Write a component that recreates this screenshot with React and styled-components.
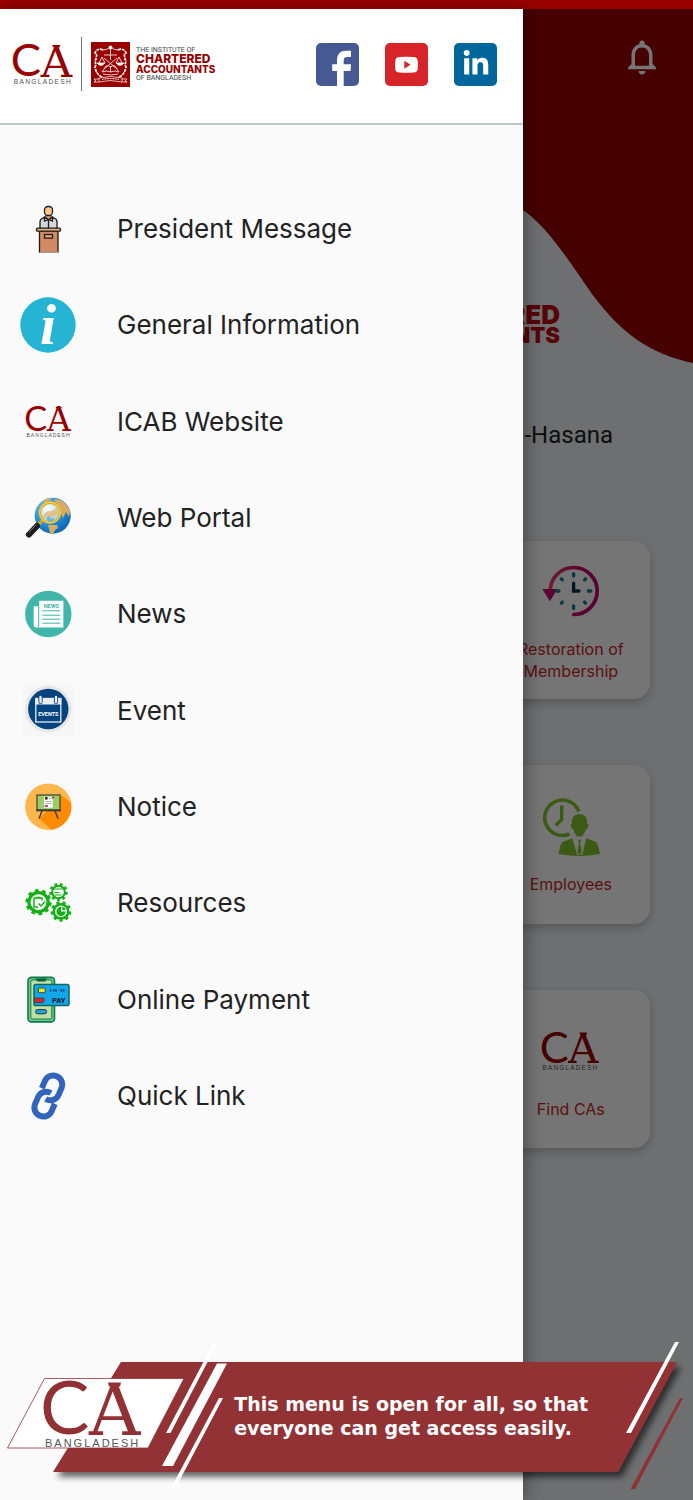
import React from "react";
import styled, { createGlobalStyle } from "styled-components";
import { MdNotificationsNone } from "react-icons/md";
import { FaLinkedinIn } from "react-icons/fa";

const BRAND = "#990000";
const BANNER = "#933034";

const GlobalStyle = createGlobalStyle`
	* { box-sizing: border-box; }
	body {
		margin: 0;
		font-family: Inter, "Liberation Sans", sans-serif;
		color: #222;
	}
	a { color: inherit; text-decoration: none; }
	svg { overflow: visible; }
`;

const Page = styled.div`
	display: flex;
	flex-direction: column;
	min-height: 100vh;
	overflow: hidden;
`;

const StatusBar = styled.div`
	height: 9px;
	background: ${BRAND};
`;

// every layer of the stage (home, scrim, drawer, banner) shares one grid cell
const Stage = styled.div`
	flex: 1;
	display: grid;
	grid-template-columns: minmax(0, 1fr);
	grid-template-rows: minmax(0, 1fr);
	> * { grid-area: 1 / 1; }
`;

const Home = styled.main`
	background: #edf1f5;
`;

const Hero = styled.header`
	display: grid;
	> * { grid-area: 1 / 1; }
`;

const Wave = styled.svg`
	display: block;
	width: 100%;
	height: 354px;
`;

const HeroContent = styled.div`
	display: flex;
	flex-direction: column;
	justify-content: space-between;
	align-items: flex-end;
	padding: 27px 30px 18px;
`;

const BellButton = styled.button`
	display: flex;
	padding: 0;
	border: 0;
	background: none;
	color: #fff;
	font-size: 42px;
`;

const HomeLogo = styled.div`
	margin-right: 103px;
	color: #c00a14;
	font-weight: 900;
	font-size: 26px;
	line-height: 20px;
	text-align: right;
`;

const HomeLogoSmall = styled.div`
	font-size: 22px;
`;

const UserName = styled.p`
	margin: 0;
	padding: 58px 80px 0 0;
	font-family: Roboto, sans-serif;
	font-size: 24px;
	line-height: 28px;
	text-align: right;
`;

const CardGrid = styled.section`
	display: grid;
	grid-template-columns: repeat(3, 1fr);
	gap: 66px;
	padding: 92px 43px;
`;

const Card = styled.a`
	grid-column: 3;
	aspect-ratio: 1;
	display: flex;
	flex-direction: column;
	align-items: center;
	justify-content: center;
	gap: 18px;
	padding-top: 4px;
	border-radius: 16px;
	background: #fff;
	box-shadow: 0 4px 10px rgba(0, 0, 0, 0.2);
	color: #c62828;
	font-size: 16px;
	line-height: 22px;
	text-align: center;
`;

const CardIcon = styled.svg`
	width: 58px;
	height: 58px;
`;

const Scrim = styled.div`
	background: rgba(0, 0, 0, 0.54);
`;

const Drawer = styled.aside`
	width: 75.5%;
	background: #fafafa;
	box-shadow: 4px 0 16px rgba(0, 0, 0, 0.3);
`;

const DrawerHeader = styled.div`
	display: flex;
	align-items: center;
	justify-content: space-between;
	height: 116px;
	padding: 0 26px 4px 13px;
	background: #fff;
	border-bottom: 2px solid #b9c8c2;
`;

const Brand = styled.div`
	display: flex;
	align-items: center;
`;

const BrandMark = styled.svg`
	width: 61px;
	height: 41px;
`;

const Divider = styled.span`
	width: 1px;
	height: 54px;
	margin: 0 9px 0 7px;
	background: #777;
`;

const BrandText = styled.div`
	margin-left: 6px;
	color: #444;
	font-family: Roboto, sans-serif;
	font-size: 7px;
	line-height: 8px;
`;

const BrandStrong = styled.div`
	color: ${BRAND};
	font-family: Inter, sans-serif;
	font-weight: 800;
	font-size: ${props => (props.$small ? "10px" : "12px")};
	line-height: 10px;
`;

const Social = styled.div`
	display: flex;
	gap: 26px;
`;

const SocialLink = styled.a`
	display: flex;
	align-items: center;
	justify-content: center;
	width: 43px;
	height: 43px;
	border-radius: 5px;
	background: ${props => props.$color};
	color: #fff;
	font-size: 28px;
`;

const Menu = styled.ul`
	display: grid;
	grid-auto-rows: 1fr;
	min-height: 963px;
	margin: 56px 0 0;
	padding: 0;
	list-style: none;
`;

const MenuLink = styled.a`
	display: flex;
	align-items: center;
	gap: 41px;
	height: 100%;
	padding-left: 20px;
	font-size: 26px;
	line-height: 32px;
`;

const MenuIcon = styled.svg`
	flex: none;
	width: 56px;
	height: 56px;
`;

const Banner = styled.div`
	align-self: end;
	display: grid;
	> * { grid-area: 1 / 1; }
`;

const BannerArt = styled.svg`
	display: block;
	width: 100%;
	height: auto;
`;

const BannerText = styled.p`
	margin: 0;
	padding: 56px 0 0 33.8%;
	color: #fff;
	font-family: "DejaVu Sans", sans-serif;
	font-weight: bold;
	font-size: 19px;
	line-height: 24px;
`;

// CA / BANGLADESH word mark, drawn on a 99 x 66 field
const CaLogo = ({ color = BRAND }) => (
	<g>
		<text x="-4" y="53" fontFamily="Lato, sans-serif" fontSize="74" fill={color}>C</text>
		<text x="45" y="54" fontFamily="'DejaVu Serif', serif" fontSize="71" fill={color}>A</text>
		<path d="M64 1.500h13l-1 4h-11z" fill={color} />
		<text x="1" y="66" fontFamily="'Liberation Sans', sans-serif" fontSize="11" letterSpacing="2" fill="#555">BANGLADESH</text>
	</g>
);

const Gear = ({ x, y, r, teeth, width }) => (
	<g fill="none" stroke="#12b012">
		<circle cx={x} cy={y} r={r} strokeWidth={width} />
		<circle
			cx={x}
			cy={y}
			r={r + width / 2 + 0.6}
			strokeWidth="2.6"
			pathLength={teeth * 2}
			strokeDasharray="1 1"
		/>
	</g>
);

const Emblem = () => (
	<svg width="39" height="45" viewBox="0 0 39 45" fill="none" stroke="#fff" role="img" aria-label="ICAB emblem">
		<rect width="39" height="45" fill={BRAND} stroke="none" />
		<path d="M12 8c-4-2-7 0-8 3 3 1 1 4 1 6-2 3 1 5-1 8 1 5 3 9 8 10M27 8c4-2 7 0 8 3-3 1-1 4-1 6 2 3-1 5 1 8-1 5-3 9-8 10" strokeWidth="1.7" strokeDasharray="3 .8" />
		<path d="M12 8q4 0 7.500-3 3.500 3 7.500 3M19.500 5v13M13 13h13M6 21h8M25 21h8M8 21l3-6 3 6M25 21l3-6 3 6M13 16l13 11M26 16 13 27" strokeWidth=".8" />
		<path d="M6 21q4 5 8 0M25 21q4 5 8 0" fill="#fff" strokeWidth=".5" />
		<path d="M11 30q4-2 8.500 0 4.500-2 8.500 0l-4-6q-3-1-4.500 1-1.500-2-4.500-1zM19.500 24v6M12 32q8 2 15 0" strokeWidth=".8" />
		<path d="M8 36q12-3 23 0v4q-12-3-23 0zM8 37H3l2 2-2 1h5M31 37h5l-2 2 2 1h-5" strokeWidth=".7" />
		<path d="M11 37.500q8-2 17 0" strokeWidth="1.200" strokeDasharray="1 .6" />
		<circle cx="19.500" cy="5.500" r="1.500" fill="#fff" />
	</svg>
);

const icons = {
	president: (
		<g stroke="#1c1c1c" strokeWidth="1.300">
			<path d="M20 28v-7q0-3 3-4l5.500-1 5.500 1q3 1 3 4v7z" fill="#d3d6dc" />
			<path d="M26 13.500h5v3l-2.500 2-2.500-2z" fill="#e9a863" strokeWidth=".8" />
			<path d="M24.500 16l4 3 4-3v4l-4-1.500-4 1.500zM28.500 19v8" fill="#fff" />
			<rect x="24.500" y="5.500" width="8" height="9" rx="3.500" fill="#ffc98a" />
			<rect x="19.500" y="30" width="18.500" height="21" fill="#d18a62" />
			<path d="M20 51h18" stroke="#e8b28c" />
			<rect x="16.500" y="27.200" width="24" height="3" rx="1" fill="#f0b47c" />
			<rect x="24.500" y="33.500" width="8" height="3.600" fill="#e5a273" />
		</g>
	),
	info: (
		<g>
			<circle cx="28" cy="28" r="27.700" fill="#26b4d4" />
			<text x="20" y="47" fontFamily="'Liberation Serif', serif" fontStyle="italic" fontWeight="bold" fontSize="58" fill="#fff">i</text>
		</g>
	),
	ca: (
		<svg x="6" y="12" width="46" height="31" viewBox="0 0 99 67">
			<CaLogo />
		</svg>
	),
	portal: (
		<g>
			<defs>
				<radialGradient id="sea" cx=".35" cy=".3" r=".8">
					<stop offset="0" stopColor="#8fd0f4" />
					<stop offset=".5" stopColor="#2492dc" />
					<stop offset="1" stopColor="#0b5cae" />
				</radialGradient>
				<radialGradient id="lens" cx=".4" cy=".3" r=".8">
					<stop offset="0" stopColor="#fff" />
					<stop offset="1" stopColor="#9ed0ec" />
				</radialGradient>
			</defs>
			<circle cx="32.700" cy="25.700" r="18" fill="url(#sea)" />
			<path d="M35 9c6 0 12 4 15 12l-1 6-3-5-3 6-3-7-5-3zM25 9l7-1-3 3-6 2zM28 35h9l1 3-3 2-2 4-3-1-1-4z" fill="#d8ad62" />
			<circle cx="30" cy="22.600" r="10" fill="url(#lens)" stroke="#e0ad16" strokeWidth="2.600" />
			<circle cx="30" cy="22.600" r="10.400" fill="none" stroke="#ffe36a" strokeWidth=".9" />
			<path d="M23 27q2-7 8-6l6-3 1 6-7 4-3-2-3 2z" fill="#e3bd82" opacity=".9" />
			<path d="M26 28l3-2 2 3 4-2-2 4-4 1z" fill="#64b9e4" />
			<path d="M22.500 30.500l-5 5" stroke="#d6a420" strokeWidth="3.500" />
			<path d="M17 36l-8 8.500" stroke="#1d1d20" strokeWidth="6" strokeLinecap="round" />
			<path d="M16 35l-7 7" stroke="#77777c" strokeWidth="1" strokeLinecap="round" />
		</g>
	),
	news: (
		<g>
			<circle cx="28.300" cy="28" r="23.200" fill="#40b5aa" />
			<path d="M18.200 20.200h-4.500v19q0 2.300 2.300 2.300h2.200z" fill="#fff" />
			<path d="M19.200 14.800h24.200v26.700H18.500q.7-1 .7-2.300z" fill="#fff" />
			<text x="31.300" y="21.500" textAnchor="middle" fontFamily="Roboto, sans-serif" fontWeight="bold" fontSize="5.500" fill="#40b5aa">NEWS</text>
			<path d="M22.300 24.800h18M22.300 29.200h18M22.300 33.200h18M22.300 37.200h18" stroke="#40b5aa" strokeWidth="1" />
		</g>
	),
	event: (
		<g>
			<rect x="2.300" y="1" width="52" height="53" fill="#f6f6f6" />
			<circle cx="28.300" cy="26" r="23.300" fill="#e4e6e8" />
			<circle cx="28.300" cy="26" r="20.200" fill="#064480" />
			<rect x="15.800" y="15.500" width="25" height="23.500" fill="none" stroke="#e8eef4" strokeWidth="1.300" />
			<rect x="15.300" y="15" width="26" height="6.500" fill="#e8eef4" />
			<path d="M20.500 14v5M36 14v5" stroke="#064480" strokeWidth="4.200" strokeLinecap="round" />
			<path d="M20.500 14v5M36 14v5" stroke="#e8eef4" strokeWidth="2.400" strokeLinecap="round" />
			<text x="28.300" y="32.500" textAnchor="middle" fontFamily="Roboto, sans-serif" fontWeight="bold" fontSize="5.500" fill="#fff">EVENTS</text>
		</g>
	),
	notice: (
		<g>
			<circle cx="28.300" cy="27.700" r="23.200" fill="#ffb74d" />
			<path d="M40 15.500l11 8a23.200 23.200 0 0 1-20 27.200L19 39.500l8-8z" fill="#ff8c00" />
			<path d="M22 32l-3 7.500M35 32l3 7.500" stroke="#403b38" strokeWidth="1.500" />
			<rect x="17" y="16" width="23" height="15" fill="#9ccc65" stroke="#36413a" strokeWidth="1.200" />
			<path d="M16 31.500h25" stroke="#3a3634" strokeWidth="1.600" />
			<rect x="24" y="17.700" width="8.700" height="11" fill="#fff" />
			<rect x="25" y="18" width="2.600" height="2.600" fill="#3b2b2b" />
			<path d="M28.500 19.500h3M25.500 22.500h6M25.500 24.500h6" stroke="#999" strokeWidth=".8" />
			<path d="M24.500 27h3.500M32 18.500h2" stroke="#b01060" strokeWidth="1.500" />
		</g>
	),
	resources: (
		<g>
			<Gear x={18.500} y={27.200} r={9.600} teeth={10} width={3.200} />
			<Gear x={38.500} y={17} r={6.300} teeth={9} width={2} />
			<Gear x={41} y={36.400} r={7.200} teeth={9} width={2.500} />
			<g fill="none" stroke="#12b012" strokeWidth="1.400">
				<path d="M18 32h-4v-9h8v2.500M16.500 22.500h4M18.500 28.500l2.500 2.500 4-4.500" />
				<path d="M34 14h9M34.500 17.500h5M34.500 20h7" strokeWidth="1" />
			</g>
			<path d="M41 36.400v-4.600a4.600 4.600 0 1 0 4.600 4.600z" fill="#12b012" />
			<path d="M42.300 35v-3.500a4 4 0 0 1 3.200 3.500z" fill="#12b012" />
		</g>
	),
	payment: (
		<g>
			<rect x="8" y="5.400" width="26.500" height="44.500" rx="3.500" fill="#6fcb8f" stroke="#0c7a48" strokeWidth="1.600" />
			<rect x="10.800" y="8" width="21" height="39" rx="1.500" fill="#c0dfa2" stroke="#0c7a48" strokeWidth="1" />
			<path d="M15.500 6.500h11.500l-2 3h-7.500z" fill="#0b5c3c" />
			<rect x="14" y="12.600" width="35" height="21" rx="1.800" fill="#13a6e8" stroke="#0d6a62" strokeWidth="1.500" />
			<rect x="18.400" y="16" width="6.800" height="4.700" rx=".5" fill="#f5e61c" stroke="#163d4c" strokeWidth=".9" />
			<path d="M14.500 26h8q1.700 0 1.700 2.300t-1.700 2.300h-8z" fill="#e62028" stroke="#163d4c" strokeWidth=".7" />
			<path d="M29.800 18.300h1.500M33 18.300h4M40.500 18.300h4.500" stroke="#0e3f70" strokeWidth="2.200" strokeDasharray="1.600 .6" />
			<text x="38.700" y="31" textAnchor="middle" fontFamily="Roboto, sans-serif" fontWeight="900" fontSize="7.500" fill="#10263c">PAY</text>
			<rect x="15.600" y="37.600" width="11" height="4.200" rx="2" fill="#2ba2dc" stroke="#123e46" strokeWidth="1" />
		</g>
	),
	link: (
		<g transform="translate(28.300 28) rotate(-22) scale(1.800) translate(-12 -12)" fill="none" stroke="#3165bd" strokeWidth="3.300">
			<path d="M10 13a5 5 0 0 0 7.540.540l3-3a5 5 0 0 0-7.070-7.070l-3.200 3.200" />
			<path d="M14 11a5 5 0 0 0-7.540-.540l-3 3a5 5 0 0 0 7.070 7.070l3.200-3.200" />
		</g>
	),
};

const menuItems = [
	{ icon: "president", label: "President Message" },
	{ icon: "info", label: "General Information" },
	{ icon: "ca", label: "ICAB Website" },
	{ icon: "portal", label: "Web Portal" },
	{ icon: "news", label: "News" },
	{ icon: "event", label: "Event" },
	{ icon: "notice", label: "Notice" },
	{ icon: "resources", label: "Resources" },
	{ icon: "payment", label: "Online Payment" },
	{ icon: "link", label: "Quick Link" },
];

const HomeScreen = () => (
	<Home>
		<Hero>
			<Wave viewBox="0 0 693 354" preserveAspectRatio="none" aria-hidden="true">
				<path d="M0 0H693V354C650 345 622 325 592 285C566 247 546 217 523 201C460 160 260 150 0 150Z" fill={BRAND} />
			</Wave>
			<HeroContent>
				<BellButton type="button" aria-label="Notifications">
					<MdNotificationsNone />
				</BellButton>
				<HomeLogo>
					CHARTERED
					<HomeLogoSmall>ACCOUNTANTS</HomeLogoSmall>
				</HomeLogo>
			</HeroContent>
		</Hero>
		<UserName>-Hasana</UserName>
		<CardGrid>
			<Card href="#restoration">
				<CardIcon viewBox="0 0 60 58" fill="none" strokeLinecap="round" aria-hidden="true">
					<defs>
						<linearGradient id="spin" x1="0" x2="1">
							<stop offset="0" stopColor="#f04070" />
							<stop offset=".7" stopColor="#c00068" />
						</linearGradient>
					</defs>
					<path d="M8.500 29a24.300 24.300 0 1 1 24.300 24.300" stroke="url(#spin)" strokeWidth="3.800" />
					<path d="M1.500 27.500h13.500l-6.700 11z" fill="#c80068" stroke="#c80068" strokeLinejoin="round" />
					<path d="M32.700 11v2.500M32.700 44.500v2.500M15 29h2.500M48 29h2.500M20 16.500l1 1M45 16.500l-1 1M20 41.500l1-1M45 41.500l-1-1" stroke="#1c7e90" strokeWidth="3.500" />
					<path d="M32.700 21v8h5.500" stroke="#0a3444" strokeWidth="3.500" />
				</CardIcon>
				Restoration of Membership
			</Card>
			<Card href="#employees">
				<CardIcon viewBox="1 0 58 58" fill="none" aria-hidden="true">
					<path d="M38 14.500A17.700 17.700 0 1 0 28.500 37" stroke="#82c42c" strokeWidth="3.600" />
					<path d="M20.700 8.500v14l-6 6" stroke="#82c42c" strokeWidth="3.400" />
					<path d="M31 27q-2-1-1 3 .5 2 2 2 1.500 5 4 7.500h5q2.500-2.500 4-7.500 1.500 0 2-2 1-4-1-3 1-10-7.500-10T31 27zM32 41l6 17h1l5.500-17 10.500 4q2 1 4 12-10 2-20.500 2t-21-2q2-11 4-12z" fill="#82c42c" />
					<path d="M32 41l5 17M44.500 41l-4 17" stroke="#fff" strokeWidth="1.500" />
					<path d="M36.500 42.500h4l-1 3 1.500 10-2.500 2.500-2.500-2.500 1.500-10z" fill="#82c42c" stroke="#fff" strokeWidth=".7" />
				</CardIcon>
				Employees
			</Card>
			<Card href="#find-cas">
				<CardIcon viewBox="0 0 99 66" role="img" aria-label="CA Bangladesh">
					<CaLogo />
				</CardIcon>
				Find CAs
			</Card>
		</CardGrid>
	</Home>
);

const NavDrawer = () => (
	<Drawer>
		<DrawerHeader>
			<Brand>
				<BrandMark viewBox="0 0 99 67" role="img" aria-label="CA Bangladesh">
					<CaLogo />
				</BrandMark>
				<Divider />
				<Emblem />
				<BrandText>
					THE INSTITUTE OF
					<BrandStrong>CHARTERED</BrandStrong>
					<BrandStrong $small>ACCOUNTANTS</BrandStrong>
					OF BANGLADESH
				</BrandText>
			</Brand>
			<Social>
				<SocialLink href="#facebook" aria-label="Facebook" $color="#475993">
					<svg width="43" height="43" viewBox="0 0 43 43">
						<path d="M21 43V28h-4.800v-6.800H21V17c0-6 3.500-9.300 9-9.300h5V14h-3.500c-2.800 0-3.800 1-3.800 3.500v3.700H35L34.500 28h-6.800v15z" fill="#fff" />
					</svg>
				</SocialLink>
				<SocialLink href="#youtube" aria-label="YouTube" $color="#d62429">
					<svg width="43" height="43" viewBox="0 0 43 43">
						<path d="M14.500 14q7-.6 14 0 4 .2 4.200 4 .4 4 0 8-.2 3.300-4.200 3.500-7 .5-14 0-4-.2-4.200-3.500-.4-4 0-8 .2-3.800 4.200-4z" fill="#fff" />
						<path d="M19.300 17.700v8l6.200-4z" fill="#d62429" />
					</svg>
				</SocialLink>
				<SocialLink href="#linkedin" aria-label="LinkedIn" $color="#00669b">
					<FaLinkedinIn />
				</SocialLink>
			</Social>
		</DrawerHeader>
		<nav>
			<Menu>
				{menuItems.map(item => (
					<li key={item.icon}>
						<MenuLink href={`#${item.icon}`}>
							<MenuIcon viewBox="0 0 56 56" aria-hidden="true">{icons[item.icon]}</MenuIcon>
							{item.label}
						</MenuLink>
					</li>
				))}
			</Menu>
		</nav>
	</Drawer>
);

const NoticeBanner = () => (
	<Banner>
		<BannerArt viewBox="0 0 693 164" role="img" aria-label="CA Bangladesh">
			<defs>
				<filter id="lift" x="-5%" y="-10%" width="110%" height="130%">
					<feDropShadow dx="4" dy="5" stdDeviation="3" floodOpacity=".6" />
				</filter>
			</defs>
			<path d="M121 26H677L618 136H53Z" fill={BANNER} filter="url(#lift)" />
			<path d="M44.500 42.500H184L148 112H7.500Z" fill="#fff" stroke={BANNER} strokeWidth=".8" />
			<path d="M214 6h4l-47.500 91H166zM217 27.500h10L173 130h-11zM219 62h4l-48 91h-4.500zM675 6h4l-48 91h-5z" fill="#fff" />
			<path d="M680 62h3l-48 91h-4.500z" fill={BANNER} />
			<svg x="44" y="45" width="99" height="67" viewBox="0 0 99 67">
				<CaLogo color={BANNER} />
			</svg>
		</BannerArt>
		<BannerText>
			This menu is open for all, so that
			<br />
			everyone can get access easily.
		</BannerText>
	</Banner>
);

export default function App() {
	return (
		<Page>
			<GlobalStyle />
			<StatusBar />
			<Stage>
				<HomeScreen />
				<Scrim />
				<NavDrawer />
				<NoticeBanner />
			</Stage>
		</Page>
	);
}
